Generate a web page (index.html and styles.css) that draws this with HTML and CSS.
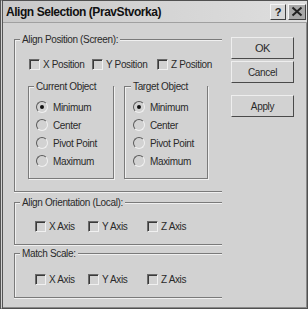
FILE: index.html
```html
<!DOCTYPE html>
<html>
<head>
<meta charset="utf-8">
<link rel="stylesheet" href="styles.css">
</head>
<body>
<div class="dialog">
  <div class="titlebar">
    <span class="title">Align Selection (PravStvorka)</span>
    <div class="tb-btns">
      <span class="tb-btn help">?</span>
      <span class="tb-btn close"><svg width="12" height="11" viewBox="0 0 12 11"><path d="M1.5 1.5 L10.5 9.5 M10.5 1.5 L1.5 9.5" stroke="#222" stroke-width="2"/></svg></span>
    </div>
  </div>
  <div class="content">
    <div class="left">
      <div class="group g-pos">
        <span class="glabel">Align Position (Screen):</span>
        <div class="checkrow r-pos">
          <label class="chk w63"><span class="box"></span>X Position</label>
          <label class="chk w65"><span class="box"></span>Y Position</label>
          <label class="chk"><span class="box"></span>Z Position</label>
        </div>
        <div class="subgroups">
          <div class="sub sub-cur">
            <span class="glabel">Current Object</span>
            <div class="radios">
              <div class="rad"><span class="dot on"></span>Minimum</div>
              <div class="rad"><span class="dot"></span>Center</div>
              <div class="rad"><span class="dot"></span>Pivot Point</div>
              <div class="rad"><span class="dot"></span>Maximum</div>
            </div>
          </div>
          <div class="sub sub-tgt">
            <span class="glabel">Target Object</span>
            <div class="radios">
              <div class="rad"><span class="dot on"></span>Minimum</div>
              <div class="rad"><span class="dot"></span>Center</div>
              <div class="rad"><span class="dot"></span>Pivot Point</div>
              <div class="rad"><span class="dot"></span>Maximum</div>
            </div>
          </div>
        </div>
      </div>
      <div class="group g-ori">
        <span class="glabel">Align Orientation (Local):</span>
        <div class="checkrow r-axis">
          <label class="chk w53"><span class="box"></span>X Axis</label>
          <label class="chk w59"><span class="box"></span>Y Axis</label>
          <label class="chk"><span class="box"></span>Z Axis</label>
        </div>
      </div>
      <div class="group g-scale">
        <span class="glabel">Match Scale:</span>
        <div class="checkrow r-axis">
          <label class="chk w53"><span class="box"></span>X Axis</label>
          <label class="chk w59"><span class="box"></span>Y Axis</label>
          <label class="chk"><span class="box"></span>Z Axis</label>
        </div>
      </div>
    </div>
    <div class="right">
      <div class="btn">OK</div>
      <div class="btn b-cancel">Cancel</div>
      <div class="btn b-apply">Apply</div>
    </div>
  </div>
</div>
</body>
</html>
```
FILE: styles.css
```css
* { box-sizing: border-box; }
html, body { margin: 0; padding: 0; background: #d2d2d2; }
body {
  font-family: "Liberation Sans", Arial, sans-serif;
  font-size: 10px;
  letter-spacing: -0.35px;
  color: #2a2a2a;
}
.dialog {
  width: 308px;
  height: 309px;
  background: #d2d2d2;
  border: 1px solid #505050;
  border-left: 3px double #555;
  box-shadow: inset -1px -1px 0 #8a8a8a;
  overflow: hidden;
  display: flex;
  flex-direction: column;
}
.titlebar {
  height: 22px;
  flex: none;
  display: flex;
  align-items: center;
  justify-content: space-between;
  padding: 0 1px 0 3px;
  background: linear-gradient(90deg, #c9c9c9 0%, #d6d6d6 60%, #dedede 100%);
  border-bottom: 1px solid #a0a0a0;
}
.title {
  font-weight: bold;
  font-size: 12px;
  color: #111;
  letter-spacing: -0.45px;
}
.tb-btns { display: flex; gap: 2px; }
.tb-btn {
  width: 16px;
  height: 16px;
  display: flex;
  align-items: center;
  justify-content: center;
  border: 1px solid;
  border-color: #f4f4f4 #404040 #404040 #f4f4f4;
  background: #d8d8d8;
  font-weight: bold;
  font-size: 11px;
  letter-spacing: 0;
  color: #222;
}
.tb-btn.close { width: 18px; background: #a8a8a8; }
.content {
  flex: 1;
  display: flex;
  align-items: flex-start;
  padding: 14px 0 0 11px;
}
.left { margin-top: 2px; width: 208px; flex: none; }
.group {
  border: 1px solid #7a7a7a;
  border-right: none;
  box-shadow: inset 1px 1px 0 #f0f0f0, 0 1px 0 #f0f0f0;
  display: flex;
  flex-direction: column;
  align-items: flex-start;
}
.glabel {
  display: block;
  margin-top: -7px;
  margin-left: 5px;
  padding: 0 2px;
  line-height: 13px;
  background: #d2d2d2;
  white-space: nowrap;
}
.g-pos { height: 153px; }
.g-ori { height: 43px; margin-top: 10px; }
.g-scale { height: 45px; margin-top: 8px; }
.checkrow { display: flex; height: 13px; align-items: center; }
.r-pos { margin-top: 12px; padding-left: 14px; }
.r-axis { margin-top: 11px; padding-left: 20px; }
.g-scale .r-axis { margin-top: 13px; }
.chk { display: flex; align-items: center; gap: 3px; white-space: nowrap; }
.w63 { width: 63px; }
.w65 { width: 65px; }
.w53 { width: 53px; }
.w59 { width: 59px; }
.box {
  width: 11px;
  height: 11px;
  flex: none;
  border: 1px solid;
  border-color: #6a6a6a #f0f0f0 #f0f0f0 #6a6a6a;
  box-shadow: inset 1px 1px 0 #3a3a3a;
}
.subgroups { display: flex; gap: 10px; margin-top: 15px; margin-left: 13px; }
.sub {
  height: 93px;
  border: 1px solid #7a7a7a;
  box-shadow: inset 1px 1px 0 #f0f0f0, 1px 1px 0 #f0f0f0;
}
.sub-cur { width: 86px; padding-left: 7px; }
.sub-tgt { width: 84px; padding-left: 8px; }
.sub .glabel { margin-left: -2px; }
.radios { margin-top: 5px; }
.rad { height: 18px; display: flex; align-items: center; gap: 5px; white-space: nowrap; }
.dot {
  width: 12px;
  height: 12px;
  flex: none;
  border-radius: 50%;
  border: 1px solid;
  border-color: #5a5a5a #f0f0f0 #f0f0f0 #5a5a5a;
  display: flex;
  align-items: center;
  justify-content: center;
}
.dot.on::after {
  content: "";
  width: 4px;
  height: 4px;
  border-radius: 50%;
  background: #111;
}
.right {
  margin-left: 9px;
  display: flex;
  flex-direction: column;
}
.btn {
  width: 63px;
  height: 22px;
  display: flex;
  align-items: center;
  justify-content: center;
  border: 1px solid;
  border-color: #eeeeee #4a4a4a #4a4a4a #eeeeee;
}
.btn:first-child { font-size: 11px; }
.b-cancel { margin-top: 2px; }
.b-apply { margin-top: 12px; }
```
